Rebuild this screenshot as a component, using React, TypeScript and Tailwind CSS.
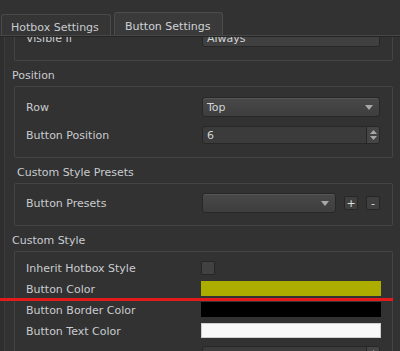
import type { ReactNode } from 'react';

const Arrow = () => (
  <svg width="8" height="5" viewBox="0 0 8 5" className="block">
    <path d="M0 0 H8 L4 5 Z" fill="#a8a8a8" />
  </svg>
);

function Combo({ text, width = 'w-[178px]' }: { text?: string; width?: string }) {
  return (
    <div
      className={`${width} h-[20px] rounded-[3px] border border-[#272727] bg-gradient-to-b from-[#484848] to-[#3e3e3e] shadow-[inset_0_1px_0_#555] flex items-center justify-between pl-[4px] pr-[6px] text-[#d2d4d6]`}
    >
      <span className="pt-[2px]">{text}</span>
      <Arrow />
    </div>
  );
}

function SpinBox({ value }: { value: string }) {
  return (
    <div className="w-[178px] h-[18px] rounded-[3px] border border-[#272727] bg-[#3b3b3b] flex overflow-hidden">
      <div className="flex-1 flex items-center pl-[4px] pt-[2px] text-[#d2d4d6]">{value}</div>
      <div className="w-[13px] border-l border-[#262626] bg-[#454545] flex flex-col items-center justify-center gap-[2px]">
        <svg width="7" height="4" viewBox="0 0 7 4" className="block">
          <path d="M0 4 H7 L3.5 0 Z" fill="#a8a8a8" />
        </svg>
        <svg width="7" height="4" viewBox="0 0 7 4" className="block">
          <path d="M0 0 H7 L3.5 4 Z" fill="#a8a8a8" />
        </svg>
      </div>
    </div>
  );
}

function Row({ label, height, children }: { label: string; height: string; children: ReactNode }) {
  return (
    <div className={`flex items-center ${height}`}>
      <div className="w-[176px] pt-[2px] text-[#c9ccd0]">{label}</div>
      {children}
    </div>
  );
}

function Box({ className, children }: { className: string; children: ReactNode }) {
  return (
    <div className={`ml-[9px] w-[379px] border border-[#444444] rounded-[2px] pl-[11px] ${className}`}>
      {children}
    </div>
  );
}

function Title({ text, indent }: { text: string; indent: string }) {
  return (
    <div className={`h-[25px] pt-[8px] leading-[14px] text-[#c9ccd0] ${indent}`}>{text}</div>
  );
}

function SmallButton({ children }: { children: ReactNode }) {
  return (
    <div className="w-[14px] h-[14px] rounded-[2px] border border-[#262626] bg-[#3f3f3f] flex items-center justify-center text-[#d8e0d8] leading-none">
      {children}
    </div>
  );
}

function ColorBar({ color }: { color: string }) {
  return <div className={`ml-[-1px] w-[180px] h-[15px] ${color}`} />;
}

export default function App() {
  return (
    <div className="w-[400px] h-[351px] overflow-hidden bg-[#323232] text-[11px] leading-[14px] font-['DejaVu_Sans',Verdana,sans-serif] relative">
      {/* Tabs */}
      <div className="h-[35px] flex items-end">
        <div className="ml-[1px] w-[110px] h-[21px] rounded-t-[3px] border border-b-0 border-[#4a4a4a] bg-[#353535] pl-[9px] pt-[6px] text-[#c9ccd0]">
          Hotbox Settings
        </div>
        <div className="ml-[3px] w-[109px] h-[23px] rounded-t-[3px] border border-b-0 border-[#4c4c4c] bg-[#3a3a3a] pl-[10px] pt-[7px] text-[#d0d3d6]">
          Button Settings
        </div>
      </div>
      <div className="h-px bg-[#474747]" />
      <div className="h-px bg-[#252525]" />

      {/* Scroll area */}
      <div className="h-[314px] flex">
        <div className="w-[4px] bg-[#2e2e2e]" />
        <div className="w-px bg-[#3c3c3c]" />
        <div className="flex-1 overflow-hidden">
          <div className="mt-[-18px]">
            <Box className="h-[42px] pt-[9px]">
              <Row label="Visible If" height="h-[18px]">
                <div className="w-[178px] h-[18px] rounded-[3px] border border-[#272727] bg-[#404040] flex items-center pl-[4px] pt-[2px] text-[#d2d4d6]">
                  Always
                </div>
              </Row>
            </Box>

            <Title text="Position" indent="pl-[7px]" />
            <Box className="h-[72px] pt-[10px]">
              <Row label="Row" height="h-[20px]">
                <Combo text="Top" />
              </Row>
              <div className="h-[9px]" />
              <Row label="Button Position" height="h-[18px]">
                <SpinBox value="6" />
              </Row>
            </Box>

            <Title text="Custom Style Presets" indent="pl-[12px]" />
            <Box className="h-[43px] pt-[9px]">
              <Row label="Button Presets" height="h-[20px]">
                <Combo width="w-[134px]" />
                <div className="ml-[8px]">
                  <SmallButton>+</SmallButton>
                </div>
                <div className="ml-[8px]">
                  <SmallButton>-</SmallButton>
                </div>
              </Row>
            </Box>

            <Title text="Custom Style" indent="pl-[7px]" />
            <Box className="h-[120px] pt-[5px] border-b-0">
              <Row label="Inherit Hotbox Style" height="h-[21px]">
                <div className="ml-[-1px] w-[14px] h-[14px] border border-[#262626] bg-[#414141] rounded-[1px]" />
              </Row>
              <Row label="Button Color" height="h-[21px]">
                <ColorBar color="bg-[#adad00]" />
              </Row>
              <Row label="Button Border Color" height="h-[21px]">
                <ColorBar color="bg-black" />
              </Row>
              <Row label="Button Text Color" height="h-[21px]">
                <div className="ml-[-1px] w-[180px] h-[15px] bg-[#f8f8f8] border border-[#cfcfcf]" />
              </Row>
              <div className="flex items-start h-[30px] pt-[5px]">
                <div className="w-[176px] pt-[9px] text-[#c9ccd0]">Button Text Size</div>
                <SpinBox value="" />
              </div>
            </Box>
          </div>
        </div>
      </div>

      {/* red annotation line */}
      <div className="absolute left-0 top-[298px] w-[393px] h-[3px] bg-[#e21c1c]" />
    </div>
  );
}
